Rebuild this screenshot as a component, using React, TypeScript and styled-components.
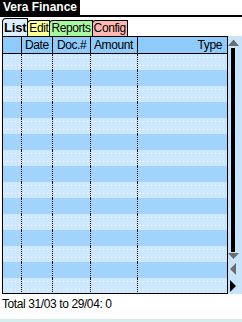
import styled, {createGlobalStyle} from 'styled-components';
import React from 'react';

const GlobalStyle = createGlobalStyle`
  html, body {
    margin: 0;
    padding: 0;
    background: #ffffff;
  }
  body {
    font-family: "Liberation Sans", Arial, sans-serif;
    font-size: 12px;
    color: #000;
  }
`;

const Screen = styled.div`
  width: 242px;
  height: 322px;
  display: flex;
  flex-direction: column;
  overflow: hidden;
  background: #ffffff;
`;

const TitleBar = styled.div`
  height: 15px;
  border-bottom: 2px solid #000;
  display: flex;
`;

const Title = styled.div`
  background: #000;
  color: #fff;
  font-weight: bold;
  font-size: 12px;
  line-height: 15px;
  padding: 0 3px 0 3px;
  width: 74px;
  white-space: nowrap;
`;

const TabBar = styled.div`
  height: 19px;
  display: flex;
  align-items: flex-end;
  padding-left: 2px;
`;

const Tab = styled.div<{$bg: string; $active?: boolean}>`
  height: ${p => (p.$active ? 18 : 16)}px;
  box-sizing: border-box;
  border: 1px solid #000;
  border-bottom: none;
  border-top-left-radius: 4px;
  margin-right: -1px;
  background: ${p => p.$bg};
  font-weight: ${p => (p.$active ? 'bold' : 'normal')};
  font-size: ${p => (p.$active ? 13 : 12)}px;
  letter-spacing: ${p => (p.$active ? '-0.2px' : '-0.4px')};
  line-height: ${p => (p.$active ? 17 : 15)}px;
  padding: 0 1px 0 1px;
  white-space: nowrap;
`;

const Main = styled.div`
  display: flex;
  padding-left: 2px;
`;

const Table = styled.div`
  width: 226px;
  height: 258px;
  box-sizing: border-box;
  border: 1px solid #000;
  display: flex;
  flex-direction: column;
`;

const COLS = '19px 31px 38px 47px 1fr';

const HeaderRow = styled.div`
  display: grid;
  grid-template-columns: ${COLS};
  height: 17px;
  box-sizing: border-box;
  border-bottom: 1px solid #000;
  background: #8ecafa;
  letter-spacing: -0.4px;
  line-height: 16px;
`;

const HeadCell = styled.div<{$right?: boolean; $pad?: number}>`
  border-right: 1px solid #000;
  padding: 0 ${p => (p.$right ? 5 : 0)}px 0 ${p => p.$pad ?? 3}px;
  text-align: ${p => (p.$right ? 'right' : 'left')};
  white-space: nowrap;
  &:last-child {
    border-right: none;
  }
`;

const Body = styled.div`
  height: 239px;
  overflow: hidden;
`;

const Row = styled.div<{$light: boolean}>`
  position: relative;
  display: grid;
  grid-template-columns: ${COLS};
  height: 16px;
  background: ${p => (p.$light ? '#cde8fe' : '#a2d3fb')};
  ${p =>
    p.$light &&
    `
    &::before, &::after {
      content: '';
      position: absolute;
      left: 0;
      right: 0;
      height: 1px;
      background: repeating-linear-gradient(90deg, rgba(255,255,255,0.95) 0 1px, transparent 1px 4px);
    }
    &::before { top: 3px; }
    &::after { top: 11px; }
  `}
`;

const Cell = styled.div`
  border-right: 1px dotted #000;
  &:last-child {
    border-right: none;
  }
`;

const ScrollBar = styled.div`
  width: 14px;
  height: 258px;
  background: #c8e4fa;
  display: flex;
  flex-direction: column;
  align-items: flex-start;
  padding-top: 3px;
  box-sizing: border-box;
`;

const Thumb = styled.div`
  width: 4px;
  height: 204px;
  background: #000;
  margin: 2px 0 1px 3px;
`;

const Arrow = styled.svg<{$gap?: number}>`
  display: block;
  margin-top: ${p => p.$gap ?? 0}px;
`;

const Footer = styled.div`
  flex: 1;
  padding: 3px 0 0 2px;
  letter-spacing: -0.4px;
  line-height: 14px;
  border-bottom: 3px solid #d4eeee;
`;

const rows = Array.from({length: 15}, (_, i) => i);

export default function App() {
  return (
    <Screen>
      <GlobalStyle />
      <TitleBar>
        <Title>Vera Finance</Title>
      </TitleBar>
      <TabBar>
        <Tab $bg="#dcefff" $active>List</Tab>
        <Tab $bg="#ffff99">Edit</Tab>
        <Tab $bg="#a8f8a0">Reports</Tab>
        <Tab $bg="#ffb8b0">Config</Tab>
      </TabBar>
      <Main>
        <Table>
          <HeaderRow>
            <HeadCell />
            <HeadCell>Date</HeadCell>
            <HeadCell $pad={4}>Doc.#</HeadCell>
            <HeadCell>Amount</HeadCell>
            <HeadCell $right>Type</HeadCell>
          </HeaderRow>
          <Body>
            {rows.map(i => (
              <Row key={i} $light={i % 2 === 0}>
                <Cell />
                <Cell />
                <Cell />
                <Cell />
                <Cell />
              </Row>
            ))}
          </Body>
        </Table>
        <ScrollBar>
          <Arrow width="11" height="7" viewBox="0 0 11 7">
            <polygon points="0,7 5.5,0.5 11,7" fill="#6c6c6c" />
          </Arrow>
          <Thumb />
          <Arrow width="11" height="6" viewBox="0 0 11 6">
            <polygon points="0,0 11,0 5.5,6" fill="#6c6c6c" />
          </Arrow>
          <Arrow $gap={4} width="10" height="12" viewBox="0 0 10 12">
            <polygon points="8,0 8,12 2,6" fill="#6c6c6c" />
          </Arrow>
          <Arrow $gap={5} width="10" height="12" viewBox="0 0 10 12">
            <polygon points="2,0 2,12 8,6" fill="#000" />
          </Arrow>
        </ScrollBar>
      </Main>
      <Footer>Total 31/03 to 29/04: 0</Footer>
    </Screen>
  );
}
